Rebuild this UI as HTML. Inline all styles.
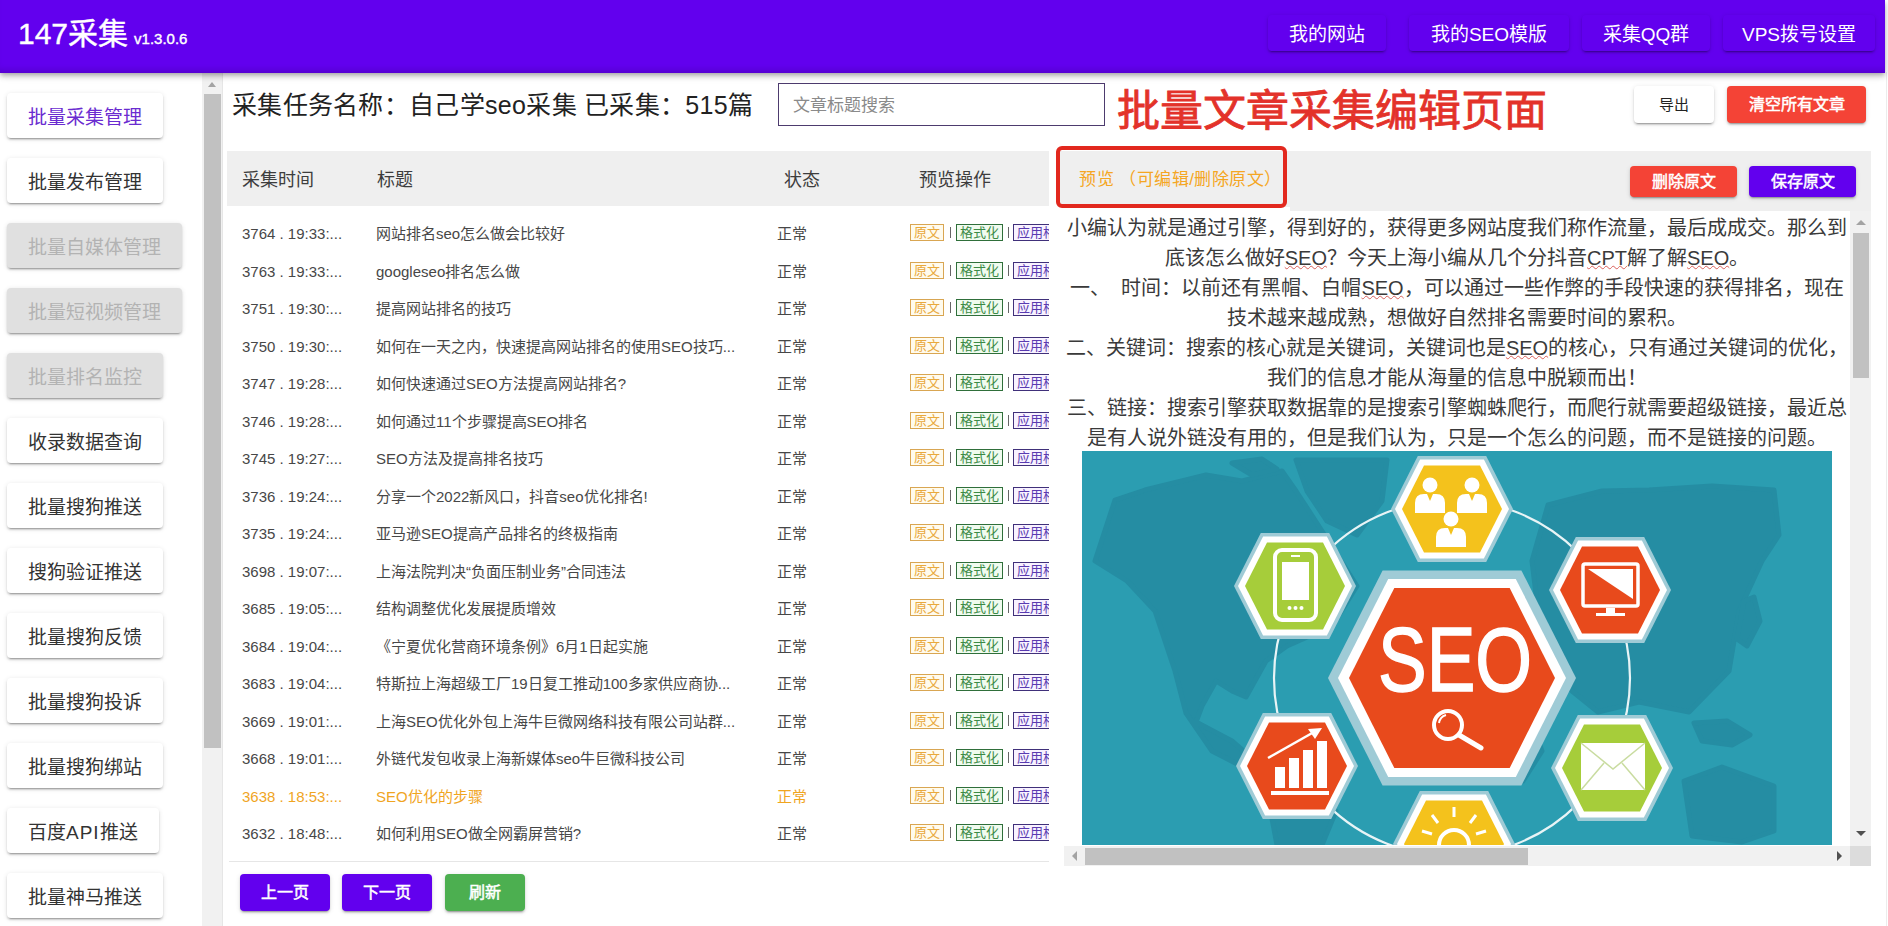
<!DOCTYPE html>
<html lang="zh-CN"><head><meta charset="utf-8">
<style>
*{box-sizing:border-box;margin:0;padding:0}
html,body{width:1888px;height:926px;overflow:hidden;background:#fff;font-family:"Liberation Sans",sans-serif;color:#222}
.abs{position:absolute}
#hdr{position:absolute;left:0;top:0;width:1885px;height:73px;background:#6200ee;z-index:5;box-shadow:inset 0 -7px 6px -4px rgba(0,0,0,.14),0 2px 4px -1px rgba(0,0,0,.2),0 4px 5px 0 rgba(0,0,0,.14),0 1px 10px 0 rgba(0,0,0,.12)}
#logo{position:absolute;left:18px;top:14px;color:#fff;font-size:30px;line-height:40px;white-space:nowrap;-webkit-text-stroke:0.4px #fff}
#logo small{font-size:15px;margin-left:6px}
.hb{position:absolute;top:15px;height:36px;background:#6200ee;color:#fff;font-size:19px;line-height:39px;text-align:center;border-radius:4px;white-space:nowrap;box-shadow:0 3px 1px -2px rgba(0,0,0,.2),0 2px 2px 0 rgba(0,0,0,.14),0 1px 5px 0 rgba(0,0,0,.12)}
.sb{position:absolute;left:7px;height:45px;padding:0 21px;background:#fff;font-size:19px;line-height:49px;color:#333;border-radius:4px;white-space:nowrap;box-shadow:0 3px 1px -2px rgba(0,0,0,.2),0 2px 2px 0 rgba(0,0,0,.14),0 1px 5px 0 rgba(0,0,0,.12)}
.sb.dis{background:#e0e0e0;color:#b3b3b3}
.sb.act{color:#6a2bd0}

#tbl{position:absolute;left:227px;top:151px;width:822px;height:712px;overflow:hidden}
#thead{position:absolute;left:0;top:0;width:822px;height:55px;background:#efefef;font-size:18px;color:#3d3d3d}
#thead span{position:absolute;top:2px;line-height:55px;white-space:nowrap}
.row{position:absolute;left:0;width:822px;height:22px;font-size:15px;line-height:22px;color:#474747;white-space:nowrap}
.row span{position:absolute;top:0}
.row .c1{left:15px}.row .c2{left:149px}.row .c3{left:550px}.row .c4{left:683px}
.row.hl{color:#f0a51f}
.tg{font-style:normal;display:inline-block;vertical-align:top;margin-top:1px;height:17px;line-height:15px;font-size:13px;padding:0 3px;border:1px solid}
.tg.y{color:#e9a93c;border-color:#d9a652;background:#fffbee}
.tg.g{color:#3b8a45;border-color:#2f6f3a;background:#f0fbef}
.tg.p{color:#5a3ab0;border-color:#40307a;background:#f8f2ff;margin-left:-1px}
.c4 b{display:inline-block;vertical-align:top;width:1px;height:11px;margin:4px 5px 0 5.5px;background:#666;font-size:0}
#tline{position:absolute;left:2px;top:710px;width:820px;height:1px;background:#e6e6e6}

.btn{position:absolute;border-radius:4px;text-align:center;white-space:nowrap;box-shadow:0 3px 1px -2px rgba(0,0,0,.2),0 2px 2px 0 rgba(0,0,0,.14),0 1px 5px 0 rgba(0,0,0,.12)}
.red{background:#f44336;color:#fff;-webkit-text-stroke:0.5px #fff}
.pur{background:#6200ee;color:#fff;-webkit-text-stroke:0.5px #fff}
.grn{background:#4caf50;color:#fff;-webkit-text-stroke:0.5px #fff}
.wht{background:#fff;color:#222}
#search{position:absolute;left:778px;top:83px;width:327px;height:43px;border:1px solid #4d3b6e;border-radius:0;font-size:17px;line-height:43px;color:#8a8a8a;padding-left:14px;white-space:nowrap}
#bigt{position:absolute;left:1117px;top:81px;font-size:43px;font-weight:400;-webkit-text-stroke:0.8px #e3322a;line-height:60px;color:#e3322a;white-space:nowrap}
#pband{position:absolute;left:1058px;top:151px;width:813px;height:60px;background:#efefef}
#redbox{position:absolute;left:1056px;top:146px;width:231px;height:62px;border:4px solid #e2281e;border-radius:6px}
#ptxt{position:absolute;left:1079px;top:167px;font-size:17px;letter-spacing:0.5px;line-height:26px;color:#f5a623;white-space:nowrap}
#pcontent{position:absolute;left:1062px;top:211px;width:788px;height:635px;overflow:hidden;background:#fff}
.pl{position:absolute;left:0;width:790px;height:30px;text-align:center;font-size:20px;line-height:30px;color:#3a3a3a;white-space:nowrap}
.sp{text-decoration:underline wavy #d9605a;text-decoration-thickness:1px;text-underline-offset:0px}
</style></head><body>
<div id="hdr">
  <div id="logo">147采集<small>v1.3.0.6</small></div>
  <div class="hb" style="left:1268px;width:118px">我的网站</div>
  <div class="hb" style="left:1409px;width:160px">我的SEO模版</div>
  <div class="hb" style="left:1582px;width:128px">采集QQ群</div>
  <div class="hb" style="left:1723px;width:152px">VPS拨号设置</div>
</div>
<div id="side">
  <div class="sb act" style="top:93px">批量采集管理</div>
  <div class="sb" style="top:158px">批量发布管理</div>
  <div class="sb dis" style="top:223px">批量自媒体管理</div>
  <div class="sb dis" style="top:288px">批量短视频管理</div>
  <div class="sb dis" style="top:353px">批量排名监控</div>
  <div class="sb" style="top:418px">收录数据查询</div>
  <div class="sb" style="top:483px">批量搜狗推送</div>
  <div class="sb" style="top:548px">搜狗验证推送</div>
  <div class="sb" style="top:613px">批量搜狗反馈</div>
  <div class="sb" style="top:678px">批量搜狗投诉</div>
  <div class="sb" style="top:743px">批量搜狗绑站</div>
  <div class="sb" style="top:808px">百度<span style="letter-spacing:1px">API</span>推送</div>
  <div class="sb" style="top:873px">批量神马推送</div>
</div>
<!-- sidebar scrollbar -->
<div class="abs" style="left:202px;top:72px;width:21px;height:854px;background:#f1f1f1;border-right:1px solid #e6e6e6"></div>
<div class="abs" style="left:204px;top:94px;width:17px;height:654px;background:#c1c1c1"></div>
<div class="abs" style="left:208px;top:82px;width:0;height:0;border-left:4px solid transparent;border-right:4px solid transparent;border-bottom:5px solid #a3a3a3"></div>

<!-- title -->
<div class="abs" style="left:232px;top:87px;font-size:25px;letter-spacing:0.3px;line-height:36px;color:#222;white-space:nowrap">采集任务名称：自己学seo采集 已采集：515篇</div>

<div id="tbl">
 <div id="thead"><span style="left:15px">采集时间</span><span style="left:150px">标题</span><span style="left:557px">状态</span><span style="left:692px">预览操作</span></div>
 <div style="position:absolute;left:0;top:-151px">
<div class="row" style="top:223.0px"><span class="c1">3764 . 19:33:...</span><span class="c2">网站排名seo怎么做会比较好</span><span class="c3">正常</span><span class="c4"><i class="tg y">原文</i><b>|</b><i class="tg g">格式化</i><b>|</b><i class="tg p">应用格式</i></span></div>
<div class="row" style="top:260.5px"><span class="c1">3763 . 19:33:...</span><span class="c2">googleseo排名怎么做</span><span class="c3">正常</span><span class="c4"><i class="tg y">原文</i><b>|</b><i class="tg g">格式化</i><b>|</b><i class="tg p">应用格式</i></span></div>
<div class="row" style="top:298.0px"><span class="c1">3751 . 19:30:...</span><span class="c2">提高网站排名的技巧</span><span class="c3">正常</span><span class="c4"><i class="tg y">原文</i><b>|</b><i class="tg g">格式化</i><b>|</b><i class="tg p">应用格式</i></span></div>
<div class="row" style="top:335.5px"><span class="c1">3750 . 19:30:...</span><span class="c2">如何在一天之内，快速提高网站排名的使用SEO技巧...</span><span class="c3">正常</span><span class="c4"><i class="tg y">原文</i><b>|</b><i class="tg g">格式化</i><b>|</b><i class="tg p">应用格式</i></span></div>
<div class="row" style="top:373.0px"><span class="c1">3747 . 19:28:...</span><span class="c2">如何快速通过SEO方法提高网站排名?</span><span class="c3">正常</span><span class="c4"><i class="tg y">原文</i><b>|</b><i class="tg g">格式化</i><b>|</b><i class="tg p">应用格式</i></span></div>
<div class="row" style="top:410.5px"><span class="c1">3746 . 19:28:...</span><span class="c2">如何通过11个步骤提高SEO排名</span><span class="c3">正常</span><span class="c4"><i class="tg y">原文</i><b>|</b><i class="tg g">格式化</i><b>|</b><i class="tg p">应用格式</i></span></div>
<div class="row" style="top:448.0px"><span class="c1">3745 . 19:27:...</span><span class="c2">SEO方法及提高排名技巧</span><span class="c3">正常</span><span class="c4"><i class="tg y">原文</i><b>|</b><i class="tg g">格式化</i><b>|</b><i class="tg p">应用格式</i></span></div>
<div class="row" style="top:485.5px"><span class="c1">3736 . 19:24:...</span><span class="c2">分享一个2022新风口，抖音seo优化排名!</span><span class="c3">正常</span><span class="c4"><i class="tg y">原文</i><b>|</b><i class="tg g">格式化</i><b>|</b><i class="tg p">应用格式</i></span></div>
<div class="row" style="top:523.0px"><span class="c1">3735 . 19:24:...</span><span class="c2">亚马逊SEO提高产品排名的终极指南</span><span class="c3">正常</span><span class="c4"><i class="tg y">原文</i><b>|</b><i class="tg g">格式化</i><b>|</b><i class="tg p">应用格式</i></span></div>
<div class="row" style="top:560.5px"><span class="c1">3698 . 19:07:...</span><span class="c2">上海法院判决“负面压制业务”合同违法</span><span class="c3">正常</span><span class="c4"><i class="tg y">原文</i><b>|</b><i class="tg g">格式化</i><b>|</b><i class="tg p">应用格式</i></span></div>
<div class="row" style="top:598.0px"><span class="c1">3685 . 19:05:...</span><span class="c2">结构调整优化发展提质增效</span><span class="c3">正常</span><span class="c4"><i class="tg y">原文</i><b>|</b><i class="tg g">格式化</i><b>|</b><i class="tg p">应用格式</i></span></div>
<div class="row" style="top:635.5px"><span class="c1">3684 . 19:04:...</span><span class="c2">《宁夏优化营商环境条例》6月1日起实施</span><span class="c3">正常</span><span class="c4"><i class="tg y">原文</i><b>|</b><i class="tg g">格式化</i><b>|</b><i class="tg p">应用格式</i></span></div>
<div class="row" style="top:673.0px"><span class="c1">3683 . 19:04:...</span><span class="c2">特斯拉上海超级工厂19日复工推动100多家供应商协...</span><span class="c3">正常</span><span class="c4"><i class="tg y">原文</i><b>|</b><i class="tg g">格式化</i><b>|</b><i class="tg p">应用格式</i></span></div>
<div class="row" style="top:710.5px"><span class="c1">3669 . 19:01:...</span><span class="c2">上海SEO优化外包上海牛巨微网络科技有限公司站群...</span><span class="c3">正常</span><span class="c4"><i class="tg y">原文</i><b>|</b><i class="tg g">格式化</i><b>|</b><i class="tg p">应用格式</i></span></div>
<div class="row" style="top:748.0px"><span class="c1">3668 . 19:01:...</span><span class="c2">外链代发包收录上海新媒体seo牛巨微科技公司</span><span class="c3">正常</span><span class="c4"><i class="tg y">原文</i><b>|</b><i class="tg g">格式化</i><b>|</b><i class="tg p">应用格式</i></span></div>
<div class="row hl" style="top:785.5px"><span class="c1">3638 . 18:53:...</span><span class="c2">SEO优化的步骤</span><span class="c3">正常</span><span class="c4"><i class="tg y">原文</i><b>|</b><i class="tg g">格式化</i><b>|</b><i class="tg p">应用格式</i></span></div>
<div class="row" style="top:823.0px"><span class="c1">3632 . 18:48:...</span><span class="c2">如何利用SEO做全网霸屏营销?</span><span class="c3">正常</span><span class="c4"><i class="tg y">原文</i><b>|</b><i class="tg g">格式化</i><b>|</b><i class="tg p">应用格式</i></span></div>
 </div>
 <div id="tline"></div>
</div>

<div id="search">文章标题搜索</div>
<div id="bigt">批量文章采集编辑页面</div>
<div class="btn wht" style="left:1634px;top:86px;width:80px;height:37px;line-height:37px;font-size:15px">导出</div>
<div class="btn red" style="left:1727px;top:86px;width:139px;height:37px;line-height:37px;font-size:16px">清空所有文章</div>
<div id="pband"></div>
<div class="abs" style="left:1054px;top:207px;width:236px;height:4px;background:#fff"></div>
<div id="redbox"></div>
<div id="ptxt">预览 （可编辑/删除原文）</div>
<div class="btn red" style="left:1630px;top:166px;width:107px;height:31px;line-height:31px;font-size:16px">删除原文</div>
<div class="btn pur" style="left:1749px;top:166px;width:107px;height:31px;line-height:31px;font-size:16px">保存原文</div>
<div id="pcontent">
<div class="pl" style="top:2px">小编认为就是通过引擎，得到好的，获得更多网站度我们称作流量，最后成成交。那么到</div>
<div class="pl" style="top:32px">底该怎么做好<span class="sp">SEO</span>？今天上海小编从几个分抖音<span class="sp">CPT</span>解了解<span class="sp">SEO</span>。</div>
<div class="pl" style="top:62px">一、&nbsp;&nbsp;时间：以前还有黑帽、白帽<span class="sp">SEO</span>，可以通过一些作弊的手段快速的获得排名，现在</div>
<div class="pl" style="top:92px">技术越来越成熟，想做好自然排名需要时间的累积。</div>
<div class="pl" style="top:122px">二、关键词：搜索的核心就是关键词，关键词也是<span class="sp">SEO</span>的核心，只有通过关键词的优化，</div>
<div class="pl" style="top:152px">我们的信息才能从海量的信息中脱颖而出！</div>
<div class="pl" style="top:182px">三、链接：搜索引擎获取数据靠的是搜索引擎蜘蛛爬行，而爬行就需要超级链接，最近总</div>
<div class="pl" style="top:212px">是有人说外链没有用的，但是我们认为，只是一个怎么的问题，而不是链接的问题。</div>
<div id="img" style="position:absolute;left:20px;top:240px;width:750px;height:394px"><svg width="750" height="394" viewBox="0 0 750 394">
<rect width="750" height="394" fill="#2b9db1"/>
<path d="M13,110 L33,49 L63,39 L124,24 L160,30 L200,20 L214,40 L240,80 L275,135 L250,175 L205,195 L184,210 L164,246 L150,240 L134,230 L120,255 L114,271 L150,290 L174,311 L165,318 L130,300 L104,262 L93,220 L73,160 L45,130 Z" fill="#258da3" stroke="#258da3" stroke-width="5" stroke-linejoin="round"/>
<path d="M150,12 L180,8 L195,18 L170,24 Z" fill="#258da3" stroke="#258da3" stroke-width="5" stroke-linejoin="round"/>
<path d="M214,9 L305,9 L300,50 L275,84 L245,70 L225,40 Z" fill="#258da3" stroke="#258da3" stroke-width="5" stroke-linejoin="round"/>
<path d="M466,54 L520,40 L567,39 L630,35 L692,39 L697,84 L680,110 L657,160 L647,220 L607,261 L557,251 L516,261 L490,240 L456,200 L441,251 L460,300 L441,330 L420,290 L430,200 L456,160 L450,110 Z" fill="#258da3" stroke="#258da3" stroke-width="5" stroke-linejoin="round"/>
<path d="M662,150 L672,146 L678,170 L665,195 L655,188 Z" fill="#258da3" stroke="#258da3" stroke-width="5" stroke-linejoin="round"/>
<path d="M602,330 L640,316 L692,335 L692,380 L660,391 L610,385 Z" fill="#258da3" stroke="#258da3" stroke-width="5" stroke-linejoin="round"/>
<path d="M612,272 L645,270 L668,284 L650,294 L620,290 Z" fill="#258da3" stroke="#258da3" stroke-width="5" stroke-linejoin="round"/>
<path d="M184,336 L230,335 L254,360 L240,394 L195,394 Z" fill="#258da3" stroke="#258da3" stroke-width="5" stroke-linejoin="round"/>
<circle cx="370" cy="227" r="178" fill="none" stroke="#e8f4f6" stroke-width="2.2"/>
<polygon points="246.0,227.0 300.6,119.5 439.4,119.5 494.0,227.0 439.4,334.5 300.6,334.5" fill="#9fcbd6"/>
<polygon points="256.0,227.0 306.2,128.0 433.8,128.0 484.0,227.0 433.8,326.0 306.2,326.0" fill="#ffffff"/>
<polygon points="267.0,227.0 312.3,137.0 427.7,137.0 473.0,227.0 427.7,317.0 312.3,317.0" fill="#e84a1c"/>
<text x="296" y="240" font-family="Liberation Sans" font-size="91" fill="#fff" textLength="154" lengthAdjust="spacingAndGlyphs" stroke="#fff" stroke-width="1.5">SEO</text>
<circle cx="366" cy="274" r="14" fill="none" stroke="#fff" stroke-width="4"/>
<path d="M357,272 A10,10 0 0 1 364,264" fill="none" stroke="#fff" stroke-width="2"/>
<line x1="377" y1="284" x2="399" y2="297" stroke="#fff" stroke-width="5" stroke-linecap="round"/>
<polygon points="309.0,58.0 335.8,5.0 404.2,5.0 431.0,58.0 404.2,111.0 335.8,111.0" fill="#9fcbd6"/>
<polygon points="313.0,58.0 338.1,8.5 401.9,8.5 427.0,58.0 401.9,107.5 338.1,107.5" fill="#ffffff"/>
<polygon points="320.0,58.0 342.0,14.5 398.0,14.5 420.0,58.0 398.0,101.5 342.0,101.5" fill="#f4c21c"/>
<polygon points="152.0,135.0 178.8,82.0 247.2,82.0 274.0,135.0 247.2,188.0 178.8,188.0" fill="#9fcbd6"/>
<polygon points="156.0,135.0 181.1,85.5 244.9,85.5 270.0,135.0 244.9,184.5 181.1,184.5" fill="#ffffff"/>
<polygon points="163.0,135.0 185.0,91.5 241.0,91.5 263.0,135.0 241.0,178.5 185.0,178.5" fill="#a6cd3a"/>
<polygon points="467.0,139.0 493.8,86.0 562.2,86.0 589.0,139.0 562.2,192.0 493.8,192.0" fill="#9fcbd6"/>
<polygon points="471.0,139.0 496.1,89.5 559.9,89.5 585.0,139.0 559.9,188.5 496.1,188.5" fill="#ffffff"/>
<polygon points="478.0,139.0 500.0,95.5 556.0,95.5 578.0,139.0 556.0,182.5 500.0,182.5" fill="#e84a1c"/>
<polygon points="154.0,315.0 180.8,262.0 249.2,262.0 276.0,315.0 249.2,368.0 180.8,368.0" fill="#9fcbd6"/>
<polygon points="158.0,315.0 183.1,265.5 246.9,265.5 272.0,315.0 246.9,364.5 183.1,364.5" fill="#ffffff"/>
<polygon points="165.0,315.0 187.0,271.5 243.0,271.5 265.0,315.0 243.0,358.5 187.0,358.5" fill="#e84a1c"/>
<polygon points="469.0,317.0 495.8,264.0 564.2,264.0 591.0,317.0 564.2,370.0 495.8,370.0" fill="#9fcbd6"/>
<polygon points="473.0,317.0 498.1,267.5 561.9,267.5 587.0,317.0 561.9,366.5 498.1,366.5" fill="#ffffff"/>
<polygon points="480.0,317.0 502.0,273.5 558.0,273.5 580.0,317.0 558.0,360.5 502.0,360.5" fill="#a6cd3a"/>
<polygon points="311.0,393.0 337.8,340.0 406.2,340.0 433.0,393.0 406.2,446.0 337.8,446.0" fill="#9fcbd6"/>
<polygon points="315.0,393.0 340.1,343.5 403.9,343.5 429.0,393.0 403.9,442.5 340.1,442.5" fill="#ffffff"/>
<polygon points="322.0,393.0 344.0,349.5 400.0,349.5 422.0,393.0 400.0,436.5 344.0,436.5" fill="#f4c21c"/>
<circle cx="348" cy="34" r="7.5" fill="#ffffff"/>
<path d="M333,62 L333,52 Q333,43 342,43 L354,43 Q363,43 363,52 L363,62 Z" fill="#ffffff"/>
<path d="M345,43 L348,50 L351,43 Z" fill="#f4c21c"/>
<circle cx="390" cy="34" r="7.5" fill="#ffffff"/>
<path d="M375,62 L375,52 Q375,43 384,43 L396,43 Q405,43 405,52 L405,62 Z" fill="#ffffff"/>
<path d="M387,43 L390,50 L393,43 Z" fill="#f4c21c"/>
<circle cx="369" cy="68" r="7.5" fill="#ffffff"/>
<path d="M354,96 L354,86 Q354,77 363,77 L375,77 Q384,77 384,86 L384,96 Z" fill="#ffffff"/>
<path d="M366,77 L369,84 L372,77 Z" fill="#f4c21c"/>
<rect x="193" y="99" width="41" height="70" rx="7" fill="none" stroke="#ffffff" stroke-width="4"/>
<rect x="200" y="111" width="27" height="38" fill="#ffffff"/>
<rect x="209" y="104" width="9" height="2" fill="#ffffff"/>
<circle cx="207.5" cy="157" r="2" fill="#ffffff"/>
<circle cx="213.5" cy="157" r="2" fill="#ffffff"/>
<circle cx="219.5" cy="157" r="2" fill="#ffffff"/>
<rect x="501" y="113" width="55" height="42" rx="2" fill="none" stroke="#ffffff" stroke-width="3.5"/>
<path d="M506,118 L551,118 L551,148 Z" fill="#ffffff"/>
<path d="M506,118 L551,148 L506,148 Z" fill="#ffffff" opacity="0"/>
<rect x="524" y="157" width="9" height="6" fill="#ffffff"/>
<rect x="514" y="162" width="29" height="3" fill="#ffffff"/>
<rect x="193" y="316" width="10" height="21" fill="#ffffff"/>
<rect x="207" y="307" width="10" height="30" fill="#ffffff"/>
<rect x="221" y="299" width="10" height="38" fill="#ffffff"/>
<rect x="235" y="290" width="10" height="47" fill="#ffffff"/>
<rect x="189" y="340" width="58" height="4" fill="#ffffff"/>
<path d="M186,307 L232,281" stroke="#ffffff" stroke-width="2.5"/>
<path d="M240,277 L226,278 L233,288 Z" fill="#ffffff"/>
<rect x="499" y="292" width="64" height="47" fill="#ffffff"/>
<path d="M499,292 L531,318 L563,292 M499,339 L522,312 M563,339 L540,312" fill="none" stroke="#c9dca0" stroke-width="1.5"/>
<path d="M372,356 L372,366 M350,364 L356,372 M394,364 L388,372 M340,380 L350,383 M404,380 L394,383" stroke="#ffffff" stroke-width="3"/>
<path d="M357,394 A15,15 0 0 1 387,394" fill="none" stroke="#ffffff" stroke-width="4"/>
</svg></div>
</div>
<!-- preview scrollbars -->
<div class="abs" style="left:1850px;top:211px;width:21px;height:635px;background:#f1f1f1"></div>
<div class="abs" style="left:1853px;top:233px;width:16px;height:145px;background:#c1c1c1"></div>
<div class="abs" style="left:1856px;top:220px;border-left:5px solid transparent;border-right:5px solid transparent;border-bottom:5px solid #a3a3a3"></div>
<div class="abs" style="left:1856px;top:831px;border-left:5px solid transparent;border-right:5px solid transparent;border-top:5px solid #505050"></div>
<div class="abs" style="left:1064px;top:846px;width:786px;height:20px;background:#f1f1f1"></div>
<div class="abs" style="left:1085px;top:848px;width:443px;height:17px;background:#c1c1c1"></div>
<div class="abs" style="left:1072px;top:851px;border-top:5px solid transparent;border-bottom:5px solid transparent;border-right:5px solid #a3a3a3"></div>
<div class="abs" style="left:1837px;top:851px;border-top:5px solid transparent;border-bottom:5px solid transparent;border-left:5px solid #505050"></div>
<div class="abs" style="left:1850px;top:846px;width:21px;height:20px;background:#dcdcdc"></div>
<div class="abs" style="left:1886px;top:72px;width:1px;height:854px;background:#ececec"></div>
<!-- pagination -->
<div class="btn pur" style="left:240px;top:874px;width:90px;height:37px;line-height:37px;font-size:16px">上一页</div>
<div class="btn pur" style="left:342px;top:874px;width:90px;height:37px;line-height:37px;font-size:16px">下一页</div>
<div class="btn grn" style="left:445px;top:874px;width:80px;height:37px;line-height:37px;font-size:16px">刷新</div>
</body></html>
